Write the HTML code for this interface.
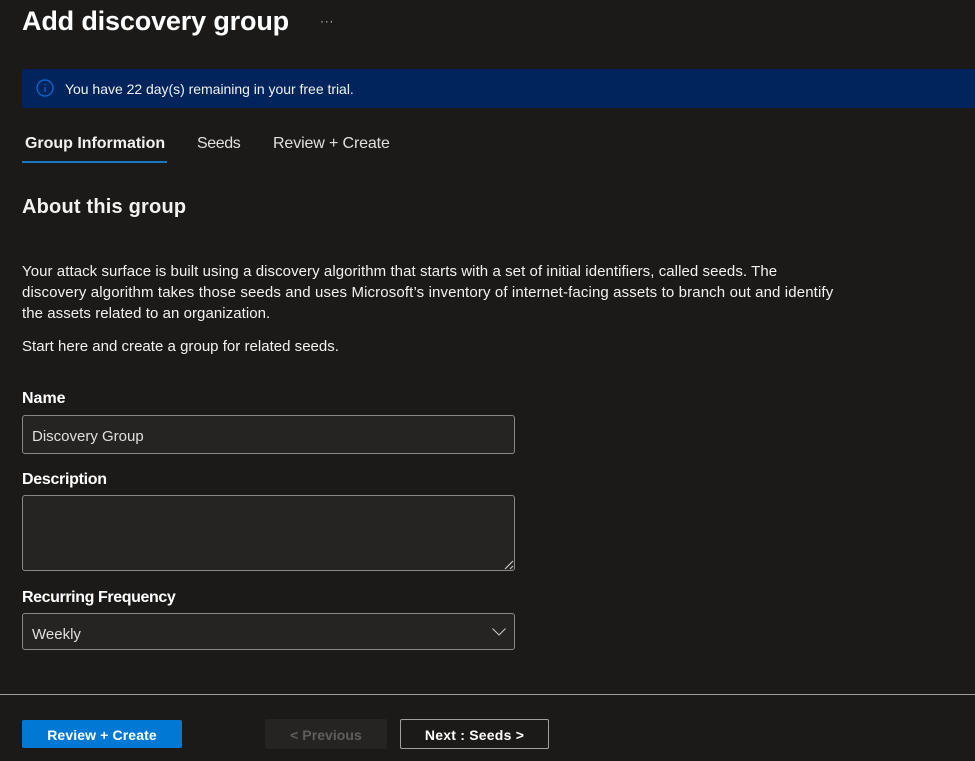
<!DOCTYPE html>
<html>
<head>
<meta charset="utf-8">
<style>
html,body{margin:0;padding:0;background:#1b1a19;}
#p{position:relative;width:975px;height:761px;overflow:hidden;background:#1b1a19;font-family:"Liberation Sans",sans-serif;color:#fff;}
.t{position:absolute;white-space:nowrap;}
.box{position:absolute;box-sizing:border-box;background:#252423;border:1px solid #8a8886;border-radius:3px;}
</style>
</head>
<body>
<div id="p">
<div class="t" style="left:22px;top:3px;font-size:27px;line-height:36px;font-weight:bold;letter-spacing:-.16px;">Add discovery group</div>
<div class="t" style="left:320px;top:14px;font-size:12px;line-height:14px;color:#c8c6c4;letter-spacing:.7px;">···</div>

<div style="position:absolute;left:22px;top:69px;width:953px;height:39px;background:#00245b;"></div>
<svg style="position:absolute;left:36px;top:79px" width="18" height="18" viewBox="0 0 18 18"><circle cx="9" cy="9" r="8" fill="none" stroke="#0f6cde" stroke-width="1.2"/><path d="M9 8v5M9 5v1.2" stroke="#0f6cde" stroke-width="1.2" fill="none"/></svg>
<div class="t" style="left:65px;top:81px;font-size:14px;line-height:17px;color:#f3f2f1;letter-spacing:-.02px;">You have 22 day(s) remaining in your free trial.</div>

<div class="t" style="left:25px;top:134px;font-size:16px;line-height:20px;font-weight:bold;color:#f3f2f1;letter-spacing:-.02px;">Group Information</div>
<div style="position:absolute;left:22px;top:161px;width:145px;height:2px;background:#1a78c2;"></div>
<div class="t" style="left:197px;top:134px;font-size:16px;line-height:20px;color:#e1dfdd;letter-spacing:-.4px;">Seeds</div>
<div class="t" style="left:273px;top:134px;font-size:16px;line-height:20px;color:#e1dfdd;letter-spacing:-.13px;">Review + Create</div>

<div class="t" style="left:22px;top:194px;font-size:20px;line-height:26px;font-weight:bold;color:#f3f2f1;letter-spacing:.2px;">About this group</div>

<div class="t" style="left:22px;top:263px;font-size:15px;line-height:17px;color:#f3f2f1;letter-spacing:.067px;">Your attack surface is built using a discovery algorithm that starts with a set of initial identifiers, called seeds. The</div>
<div class="t" style="left:22px;top:284px;font-size:15px;line-height:17px;color:#f3f2f1;letter-spacing:.127px;">discovery algorithm takes those seeds and uses Microsoft’s inventory of internet-facing assets to branch out and identify</div>
<div class="t" style="left:22px;top:305px;font-size:15px;line-height:17px;color:#f3f2f1;letter-spacing:.06px;">the assets related to an organization.</div>
<div class="t" style="left:22px;top:338px;font-size:15px;line-height:17px;color:#f3f2f1;letter-spacing:.02px;">Start here and create a group for related seeds.</div>

<div class="t" style="left:22px;top:389px;font-size:16px;line-height:20px;font-weight:bold;letter-spacing:0;">Name</div>
<div class="box" style="left:22px;top:415px;width:493px;height:39px;"></div>
<div class="t" style="left:32px;top:428px;font-size:15px;line-height:17px;color:#e1dfdd;">Discovery Group</div>

<div class="t" style="left:22px;top:470px;font-size:16px;line-height:20px;font-weight:bold;letter-spacing:-.3px;">Description</div>
<div class="box" style="left:22px;top:495px;width:493px;height:76px;"></div>
<svg style="position:absolute;left:504px;top:560px" width="10" height="10" viewBox="0 0 10 10"><path d="M1 9L9 1M6 9L9 6" stroke="#c8c6c4" stroke-width="1.2" fill="none"/></svg>

<div class="t" style="left:22px;top:588px;font-size:16px;line-height:20px;font-weight:bold;letter-spacing:-.4px;">Recurring Frequency</div>
<div class="box" style="left:22px;top:613px;width:493px;height:37px;"></div>
<div class="t" style="left:32px;top:626px;font-size:15px;line-height:17px;color:#e1dfdd;">Weekly</div>
<svg style="position:absolute;left:491px;top:627px" width="16" height="10" viewBox="0 0 16 10"><path d="M1.5 1.5L8 8L14.5 1.5" stroke="#c8c6c4" stroke-width="1.1" fill="none"/></svg>

<div style="position:absolute;left:0;top:694px;width:975px;height:1px;background:#a19f9d;"></div>

<div style="position:absolute;left:22px;top:720px;width:160px;height:28px;background:#0078d4;border-radius:2px;"></div>
<div class="t" style="left:22px;top:727px;width:160px;text-align:center;font-size:14px;line-height:17px;font-weight:bold;letter-spacing:.12px;">Review + Create</div>

<div style="position:absolute;left:265px;top:719px;width:122px;height:30px;background:#252423;border-radius:2px;"></div>
<div class="t" style="left:265px;top:727px;width:122px;text-align:center;font-size:14px;line-height:17px;font-weight:bold;color:#605e5c;letter-spacing:.05px;">&lt; Previous</div>

<div style="position:absolute;box-sizing:border-box;left:400px;top:719px;width:149px;height:30px;border:1px solid #a19f9d;border-radius:2px;"></div>
<div class="t" style="left:400px;top:727px;width:149px;text-align:center;font-size:14px;line-height:17px;font-weight:bold;letter-spacing:.22px;">Next : Seeds &gt;</div>
</div>
</body>
</html>
